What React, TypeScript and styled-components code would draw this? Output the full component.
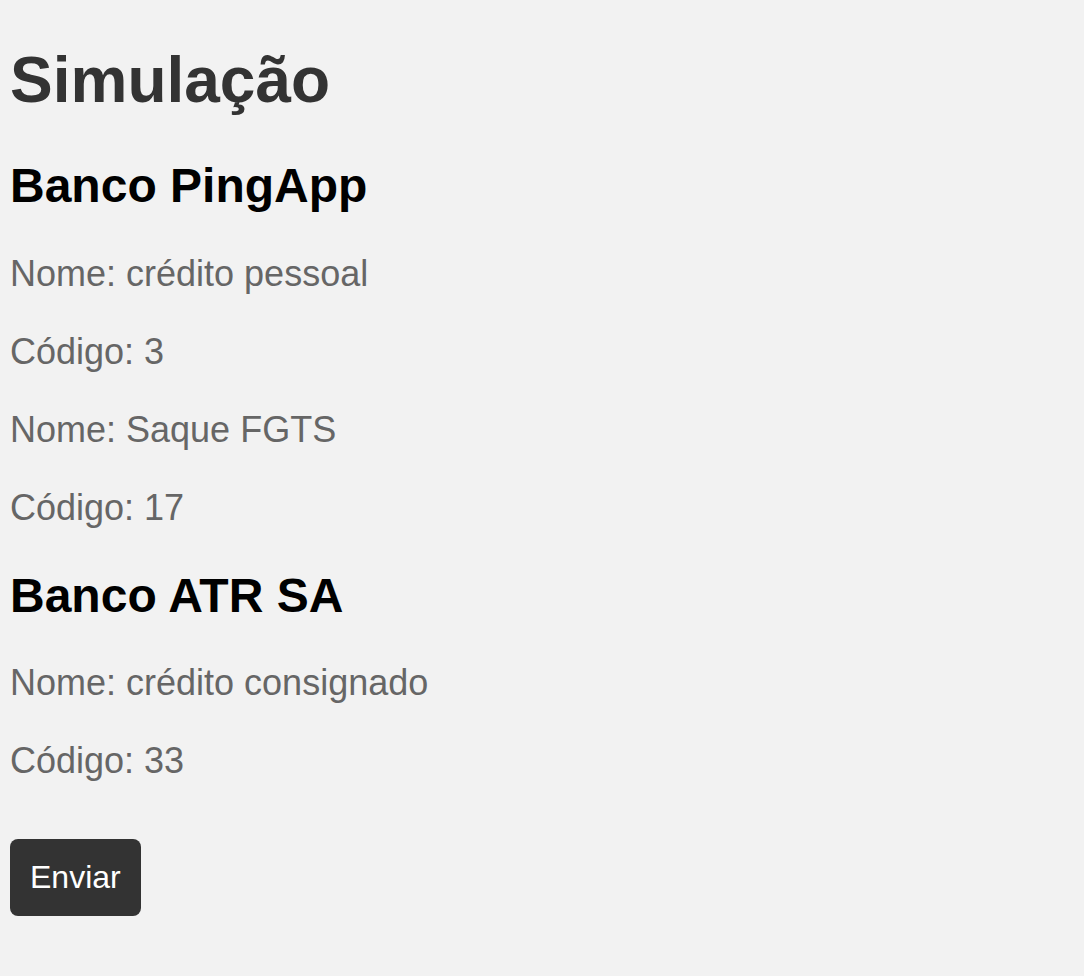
import React from "react";
import styled, { createGlobalStyle } from "styled-components";

const Global = createGlobalStyle`
  html, body {
    margin: 0;
    padding: 0;
    background: #f2f2f2;
    font-family: "Liberation Sans", Arial, sans-serif;
  }
`;

const Page = styled.main`
  padding: 0 10px;
  min-height: 976px;
  box-sizing: border-box;
  display: flow-root;
`;

const Title = styled.h1`
  font-size: 64px;
  font-weight: 700;
  color: #333333;
  margin: 43px 0 41px;
`;

const BankName = styled.h2`
  font-size: 48px;
  font-weight: 700;
  color: #000000;
  margin: 38.8px 0 39.8px;
`;

const Info = styled.p`
  font-size: 36px;
  color: #666666;
  margin: 36px 0;
`;

const Actions = styled.div`
  padding-top: 20.5px;
`;

const Button = styled.button`
  font-family: "Liberation Sans", Arial, sans-serif;
  font-size: 32px;
  line-height: 36.8px;
  color: #ffffff;
  background: #333333;
  border: none;
  border-radius: 8px;
  padding: 20px;
  cursor: pointer;
`;

const banks = [
  {
    name: "Banco PingApp",
    items: [
      { nome: "crédito pessoal", codigo: 3 },
      { nome: "Saque FGTS", codigo: 17 },
    ],
  },
  {
    name: "Banco ATR SA",
    items: [{ nome: "crédito consignado", codigo: 33 }],
  },
];

export default function App() {
  return (
    <>
      <Global />
      <Page>
        <Title>Simulação</Title>
        {banks.map((b) => (
          <section key={b.name}>
            <BankName>{b.name}</BankName>
            {b.items.map((it) => (
              <React.Fragment key={it.codigo}>
                <Info>Nome: {it.nome}</Info>
                <Info>Código: {it.codigo}</Info>
              </React.Fragment>
            ))}
          </section>
        ))}
        <Actions>
          <Button>Enviar</Button>
        </Actions>
      </Page>
    </>
  );
}
